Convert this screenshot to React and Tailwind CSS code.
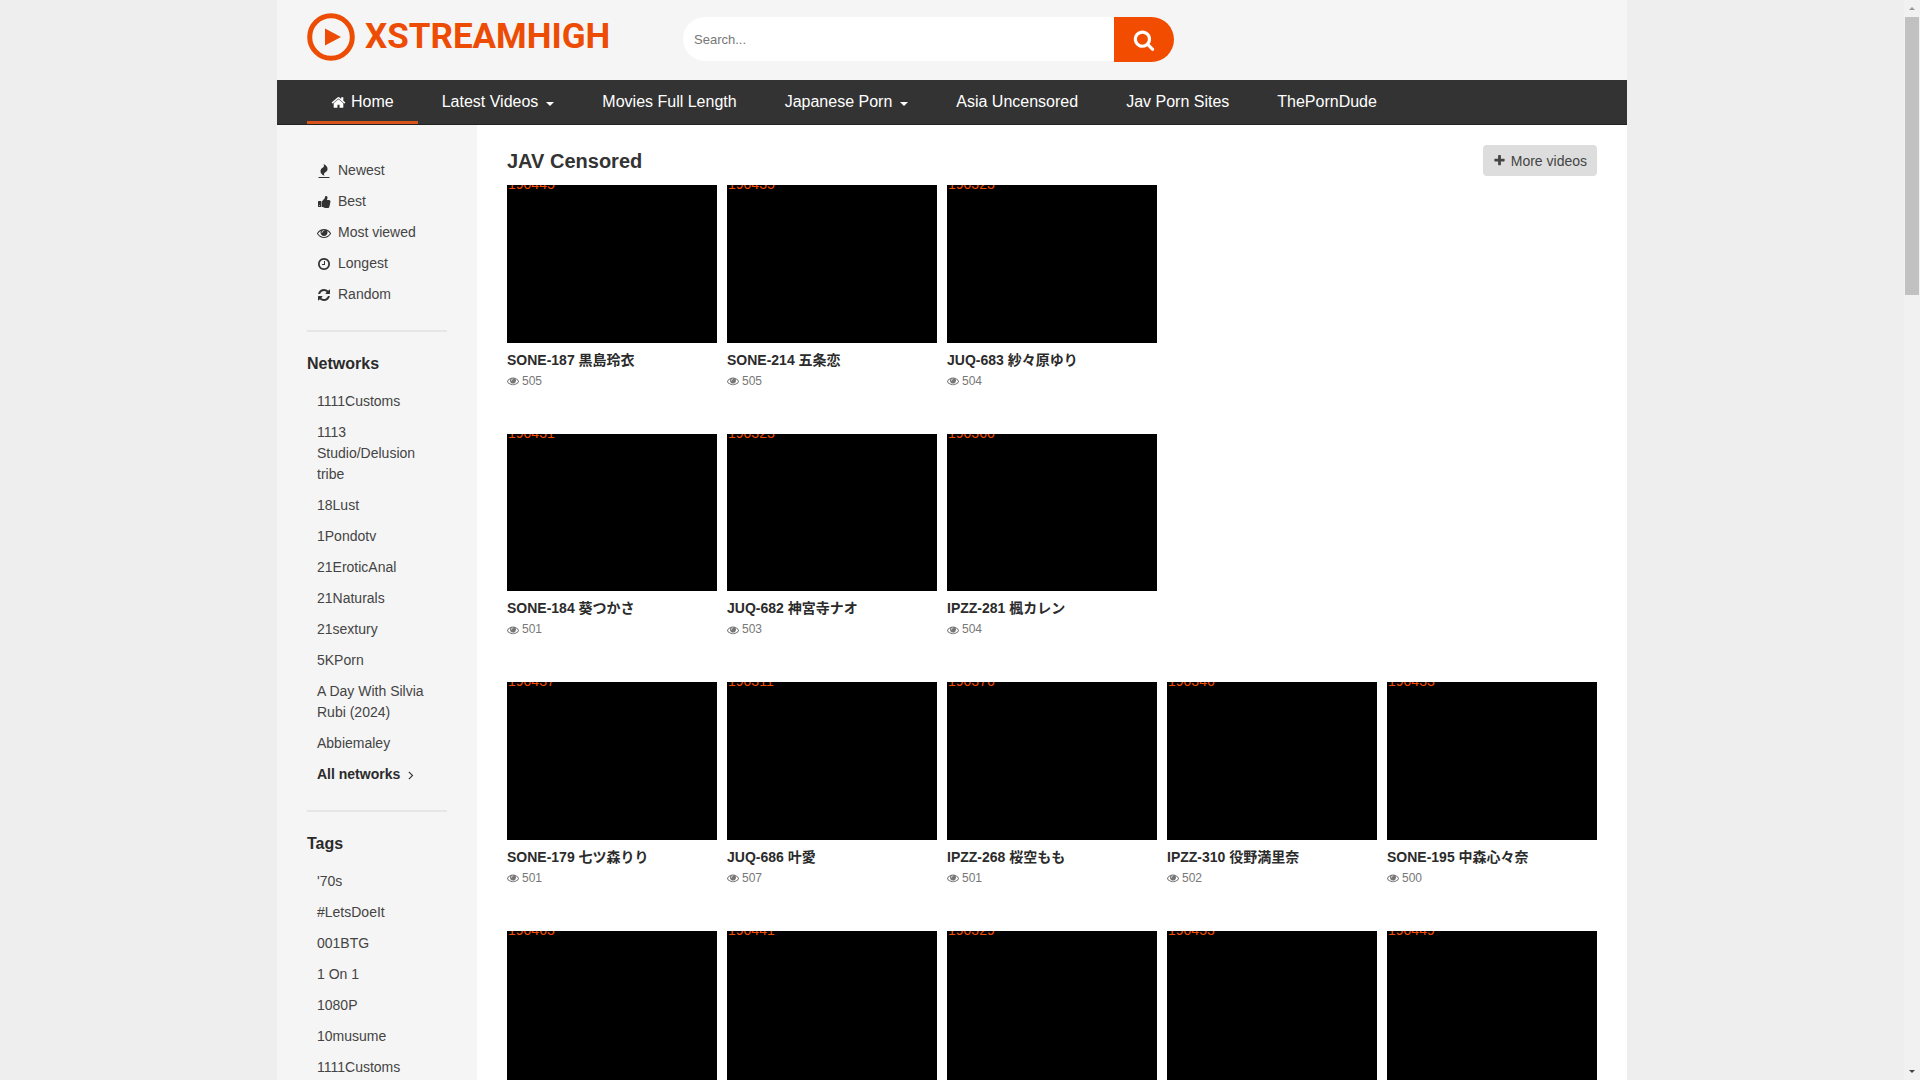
import React, { useState } from 'react';

const ICONS = {
  home: 'M1472 992v480q0 26-19 45t-45 19h-384v-384h-256v384h-384q-26 0-45-19t-19-45v-480q0-1 .5-3t.5-3l575-474 575 474q1 2 1 6zm223-69l-62 74q-8 9-21 11h-3q-13 0-21-7l-692-577-692 577q-12 8-24 7-13-2-21-11l-62-74q-8-10-7-23.5t11-21.5l719-599q32-26 76-26t76 26l244 204v-195q0-14 9-23t23-9h192q14 0 23 9t9 23v408l219 182q10 8 11 21.5t-7 23.5z',
  search: 'M1216 832q0-185-131.5-316.5t-316.5-131.5-316.5 131.5-131.5 316.5 131.5 316.5 316.5 131.5 316.5-131.5 131.5-316.5zm512 832q0 52-38 90t-90 38q-54 0-90-38l-343-342q-179 124-399 124-143 0-273.5-55.5t-225-150-150-225-55.5-273.5 55.5-273.5 150-225 225-150 273.5-55.5 273.5 55.5 225 150 150 225 55.5 273.5q0 220-124 399l343 343q37 37 37 90z',
  plus: 'M1600 736v192q0 40-28 68t-68 28h-416v416q0 40-28 68t-68 28h-192q-40 0-68-28t-28-68v-416h-416q-40 0-68-28t-28-68v-192q0-40 28-68t68-28h416v-416q0-40 28-68t68-28h192q40 0 68 28t28 68v416h416q40 0 68 28t28 68z',
  eye: 'M1664 960q-152-236-381-353 61 104 61 225 0 185-131.5 316.5t-316.5 131.5-316.5-131.5-131.5-316.5q0-121 61-225-229 117-381 353 133 205 333.5 326.5t434.5 121.5 434.5-121.5 333.5-326.5zm-720-384q0-20-14-34t-34-14q-125 0-214.5 89.5t-89.5 214.5q0 20 14 34t34 14 34-14 14-34q0-86 61-147t147-61q20 0 34-14t14-34zm848 384q0 34-20 69-140 230-376.5 368.5t-499.5 138.5-499.5-139-376.5-368q-20-35-20-69t20-69q140-229 376.5-368t499.5-139 499.5 139 376.5 368q20 35 20 69z',
  clock: 'M1024 544v448q0 14-9 23t-23 9h-320q-14 0-23-9t-9-23v-64q0-14 9-23t23-9h224v-352q0-14 9-23t23-9h64q14 0 23 9t9 23zm416 352q0-148-73-273t-198-198-273-73-273 73-198 198-73 273 73 273 198 198 273 73 273-73 198-198 73-273zm224 0q0 209-103 385.5t-279.5 279.5-385.5 103-385.5-103-279.5-279.5-103-385.5 103-385.5 279.5-279.5 385.5-103 385.5 103 279.5 279.5 103 385.5z',
  refresh: 'M1639 1056q0 5-1 7-64 268-268 434.5t-478 166.5q-146 0-282.5-55t-243.5-157l-129 129q-19 19-45 19t-45-19-19-45v-448q0-26 19-45t45-19h448q26 0 45 19t19 45-19 45l-137 137q71 66 161 102t187 36q134 0 250-65t186-179q11-17 53-117 8-23 30-23h192q13 0 22.5 9.5t9.5 22.5zm25-800v448q0 26-19 45t-45 19h-448q-26 0-45-19t-19-45 19-45l138-138q-148-137-349-137-134 0-250 65t-186 179q-11 17-53 117-8 23-30 23h-199q-13 0-22.5-9.5t-9.5-22.5v-7q65-268 270-434.5t480-166.5q146 0 284 55.5t245 156.5l130-129q19-19 45-19t45 19 19 45z',
  fire: 'M1600 1696v64q0 13-9.5 22.5t-22.5 9.5h-1344q-13 0-22.5-9.5t-9.5-22.5v-64q0-13 9.5-22.5t22.5-9.5h1344q13 0 22.5 9.5t9.5 22.5zm-256-1056q0 78-24.5 144t-64 112.5-87.5 88-96 77.5-87.5 72-64 81.5-24.5 96.5q0 96 67 224l-4-1 1 1q-90-41-160-83t-138.5-100-113.5-122.5-72.5-150.5-27.5-184q0-78 24.5-144t64-112.5 87.5-88 96-77.5 87.5-72 64-81.5 24.5-96.5q0-94-66-224l3 1-1-1q90 41 160 83t138.5 100 113.5 122.5 72.5 150.5 27.5 184z',
  thumb: 'M384 1344q0-26-19-45t-45-19-45 19-19 45 19 45 45 19 45-19 19-45zm1344-512q0 86-55 149 15 44 15 76 3 76-43 137 17 56 0 117-15 57-54 94 9 112-49 181-64 76-197 78h-129q-66 0-144-15.5t-121.5-29-120.5-39.5q-123-43-158-44-26-1-45-19.5t-19-44.5v-641q0-25 18-43.5t43-20.5q24-2 76-59t101-121q68-87 101-120 18-18 31-48t17.5-48.5 13.5-60.5q7-39 12.5-61t19.5-52 34-50q19-19 45-19 46 0 82.5 10.500t60 26 40 40.5 24 45 12 50 5 45 .5 39q0 38-9.5 76t-19 60-27.5 56q-3 6-10 18t-11 22-8 24h277q78 0 135 57t57 135zm-1184 0v640q0 26-19 45t-45 19h-288q-26 0-45-19t-19-45v-640q0-26 19-45t45-19h288q26 0 45 19t19 45z',
  angle: 'M1171 960q0 13-10 23l-466 466q-10 10-23 10t-23-10l-50-50q-10-10-10-23t10-23l393-393-393-393q-10-10-10-23t10-23l50-50q10-10 23-10t23 10l466 466q10 10 10 23z',
};

const navItems = [
  { label: 'Home', icon: 'home', active: true },
  { label: 'Latest Videos', dropdown: true },
  { label: 'Movies Full Length' },
  { label: 'Japanese Porn', dropdown: true },
  { label: 'Asia Uncensored' },
  { label: 'Jav Porn Sites' },
  { label: 'ThePornDude' },
];

const filters = [
  { label: 'Newest', icon: 'fire' },
  { label: 'Best', icon: 'thumb' },
  { label: 'Most viewed', icon: 'eye' },
  { label: 'Longest', icon: 'clock' },
  { label: 'Random', icon: 'refresh' },
];

const networks = [
  '1111Customs', '1113 Studio/Delusion tribe', '18Lust', '1Pondotv', '21EroticAnal', '21Naturals',
  '21sextury', '5KPorn', 'A Day With Silvia Rubi (2024)', 'Abbiemaley',
];

const tags = ["'70s", '#LetsDoeIt', '001BTG', '1 On 1', '1080P', '10musume', '1111Customs'];

const rows = [
  [
    { id: '190445', title: 'SONE-187 黒島玲衣', views: 505 },
    { id: '190435', title: 'SONE-214 五条恋', views: 505 },
    { id: '190323', title: 'JUQ-683 紗々原ゆり', views: 504 },
  ],
  [
    { id: '190431', title: 'SONE-184 葵つかさ', views: 501 },
    { id: '190323', title: 'JUQ-682 神宮寺ナオ', views: 503 },
    { id: '190360', title: 'IPZZ-281 楓カレン', views: 504 },
  ],
  [
    { id: '190437', title: 'SONE-179 七ツ森りり', views: 501 },
    { id: '190311', title: 'JUQ-686 叶愛', views: 507 },
    { id: '190376', title: 'IPZZ-268 桜空もも', views: 501 },
    { id: '190346', title: 'IPZZ-310 役野満里奈', views: 502 },
    { id: '190433', title: 'SONE-195 中森心々奈', views: 500 },
  ],
  [{ id: '190463' }, { id: '190441' }, { id: '190329' }, { id: '190453' }, { id: '190449' }],
];

function Icon({ name, className }) {
  return (
    <svg viewBox="0 0 1792 1792" fill="currentColor" className={className} aria-hidden="true">
      <path d={ICONS[name]} />
    </svg>
  );
}

function Header() {
  const [query, setQuery] = useState('');

  return (
    <header className="flex h-20 items-start bg-[#f5f5f5] px-[30px]">
      <a href="#" className="mt-[13px] flex w-[376px] items-center gap-[10px] text-[#ed4c05]">
        <svg viewBox="0 0 48 48" className="h-12 w-12 shrink-0" aria-hidden="true">
          <circle cx="24" cy="24" r="21.3" fill="none" stroke="currentColor" strokeWidth="5" />
          <path d="M18 15.5v17L34 24z" fill="currentColor" />
        </svg>
        <span className="font-['Roboto',sans-serif] text-[35px] font-bold leading-[48px]">XSTREAMHIGH</span>
      </a>
      <form className="mt-[17px] flex items-start" onSubmit={(e) => e.preventDefault()}>
        <input
          type="text"
          aria-label="Search"
          placeholder="Search..."
          value={query}
          onChange={(e) => setQuery(e.target.value)}
          className="h-11 w-[431px] rounded-l-full bg-white px-[11px] text-[13px] text-[#333] placeholder:text-[#777] focus:outline-none"
        />
        <button type="submit" aria-label="Search" className="flex h-[45px] w-[60px] items-center justify-center rounded-r-full bg-[#f24c00] text-white">
          <Icon name="search" className="h-[22px] w-[22px]" />
        </button>
      </form>
    </header>
  );
}

function Nav() {
  return (
    <nav className="flex h-[45px] border-b border-[#222] bg-[#333] px-[30px]">
      {navItems.map((item) => (
        <a
          key={item.label}
          href="#"
          className={
            item.active
              ? 'flex items-center gap-[5px] border-b-3 border-[#d9541a] px-6 pt-[3px] text-base text-white'
              : 'flex items-center gap-2 border-b-3 border-transparent px-6 pt-[3px] text-base text-white'
          }
        >
          {item.icon && <Icon name={item.icon} className="h-[15px] w-[15px]" />}
          {item.label}
          {item.dropdown && (
            <svg viewBox="0 0 8 4" className="mt-1 h-1 w-2 fill-white" aria-hidden="true">
              <path d="M0 0h8L4 4z" />
            </svg>
          )}
        </a>
      ))}
    </nav>
  );
}

function SideList({ title, items, children }) {
  return (
    <section className="mt-5 border-t-2 border-[#e6e6e6] pt-5">
      <h2 className="mb-[10px] text-base font-bold leading-6 text-[#2b2b2b]">{title}</h2>
      <ul>
        {items.map((item) => (
          <li key={item} className="px-[10px] py-[5px]">
            <a href="#" className="block">{item}</a>
          </li>
        ))}
        {children}
      </ul>
    </section>
  );
}

function Sidebar() {
  return (
    <aside className="w-[200px] shrink-0 bg-[#f5f5f5] px-[30px] pt-[30px] text-sm leading-[21px] text-[#444]">
      <ul>
        {filters.map((item) => (
          <li key={item.label} className="px-[10px] py-[5px]">
            <a href="#" className="flex items-center gap-[7px]">
              <Icon name={item.icon} className="h-[14px] w-[14px] text-[#333]" />
              {item.label}
            </a>
          </li>
        ))}
      </ul>
      <SideList title="Networks" items={networks}>
        <li className="px-[10px] py-[5px]">
          <a href="#" className="flex items-center gap-1 font-bold text-[#2b2b2b]">
            All networks
            <Icon name="angle" className="h-[14px] w-[14px]" />
          </a>
        </li>
      </SideList>
      <SideList title="Tags" items={tags} />
    </aside>
  );
}

function VideoCard({ video }) {
  return (
    <a href="#" className="block pb-[42px]">
      <div className="aspect-4/3 overflow-hidden bg-black">
        <div className="-mt-[11px] pl-px text-sm leading-[21px] text-[#f24c00]">{video.id}</div>
      </div>
      {video.title && (
        <>
          <h3 className="mt-[7px] truncate text-sm font-bold leading-[21px] text-[#2b2b2b]">{video.title}</h3>
          <div className="flex items-center gap-[3px] text-xs leading-[21px] text-[#777]">
            <Icon name="eye" className="h-3 w-3" />
            {video.views}
          </div>
        </>
      )}
    </a>
  );
}

function ScrollBar() {
  return (
    <div className="flex w-4 shrink-0 flex-col items-center justify-between bg-[#f1f1f1]" aria-hidden="true">
      <div className="flex flex-col items-center gap-[7px] pt-[7px]">
        <svg viewBox="0 0 6 3" className="h-[3px] w-[6px] fill-[#999]">
          <path d="M3 0l3 3H0z" />
        </svg>
        <div className="h-[278px] w-[14px] bg-[#c1c1c1]" />
      </div>
      <svg viewBox="0 0 6 3" className="mb-[7px] h-[3px] w-[6px] fill-[#444]">
        <path d="M0 0h6L3 3z" />
      </svg>
    </div>
  );
}

function App() {
  return (
    <div className="flex h-screen overflow-hidden bg-[#eee] font-['Liberation_Sans','Noto_Sans_CJK_JP',sans-serif]">
      <div className="min-w-0 flex-1 overflow-hidden">
        <div className="mx-auto flex min-h-full max-w-[1350px] flex-col bg-white">
          <Header />
          <Nav />
          <div className="flex flex-1">
            <Sidebar />
            <main className="min-w-0 flex-1 px-[30px] pt-5">
              <div className="mb-[9px] flex items-center justify-between">
                <h1 className="text-xl font-bold leading-[30px] text-[#333]">JAV Censored</h1>
                <a href="#" className="flex h-[31px] items-center gap-[5px] rounded bg-[#ddd] px-[10px] text-sm text-[#444]">
                  <Icon name="plus" className="h-[13px] w-[13px]" />
                  More videos
                </a>
              </div>
              {rows.map((row, i) => (
                <div key={i} className="grid grid-cols-5 gap-[10px]">
                  {row.map((video, j) => (
                    <VideoCard key={j} video={video} />
                  ))}
                </div>
              ))}
            </main>
          </div>
        </div>
      </div>
      <ScrollBar />
    </div>
  );
}

export default App;
